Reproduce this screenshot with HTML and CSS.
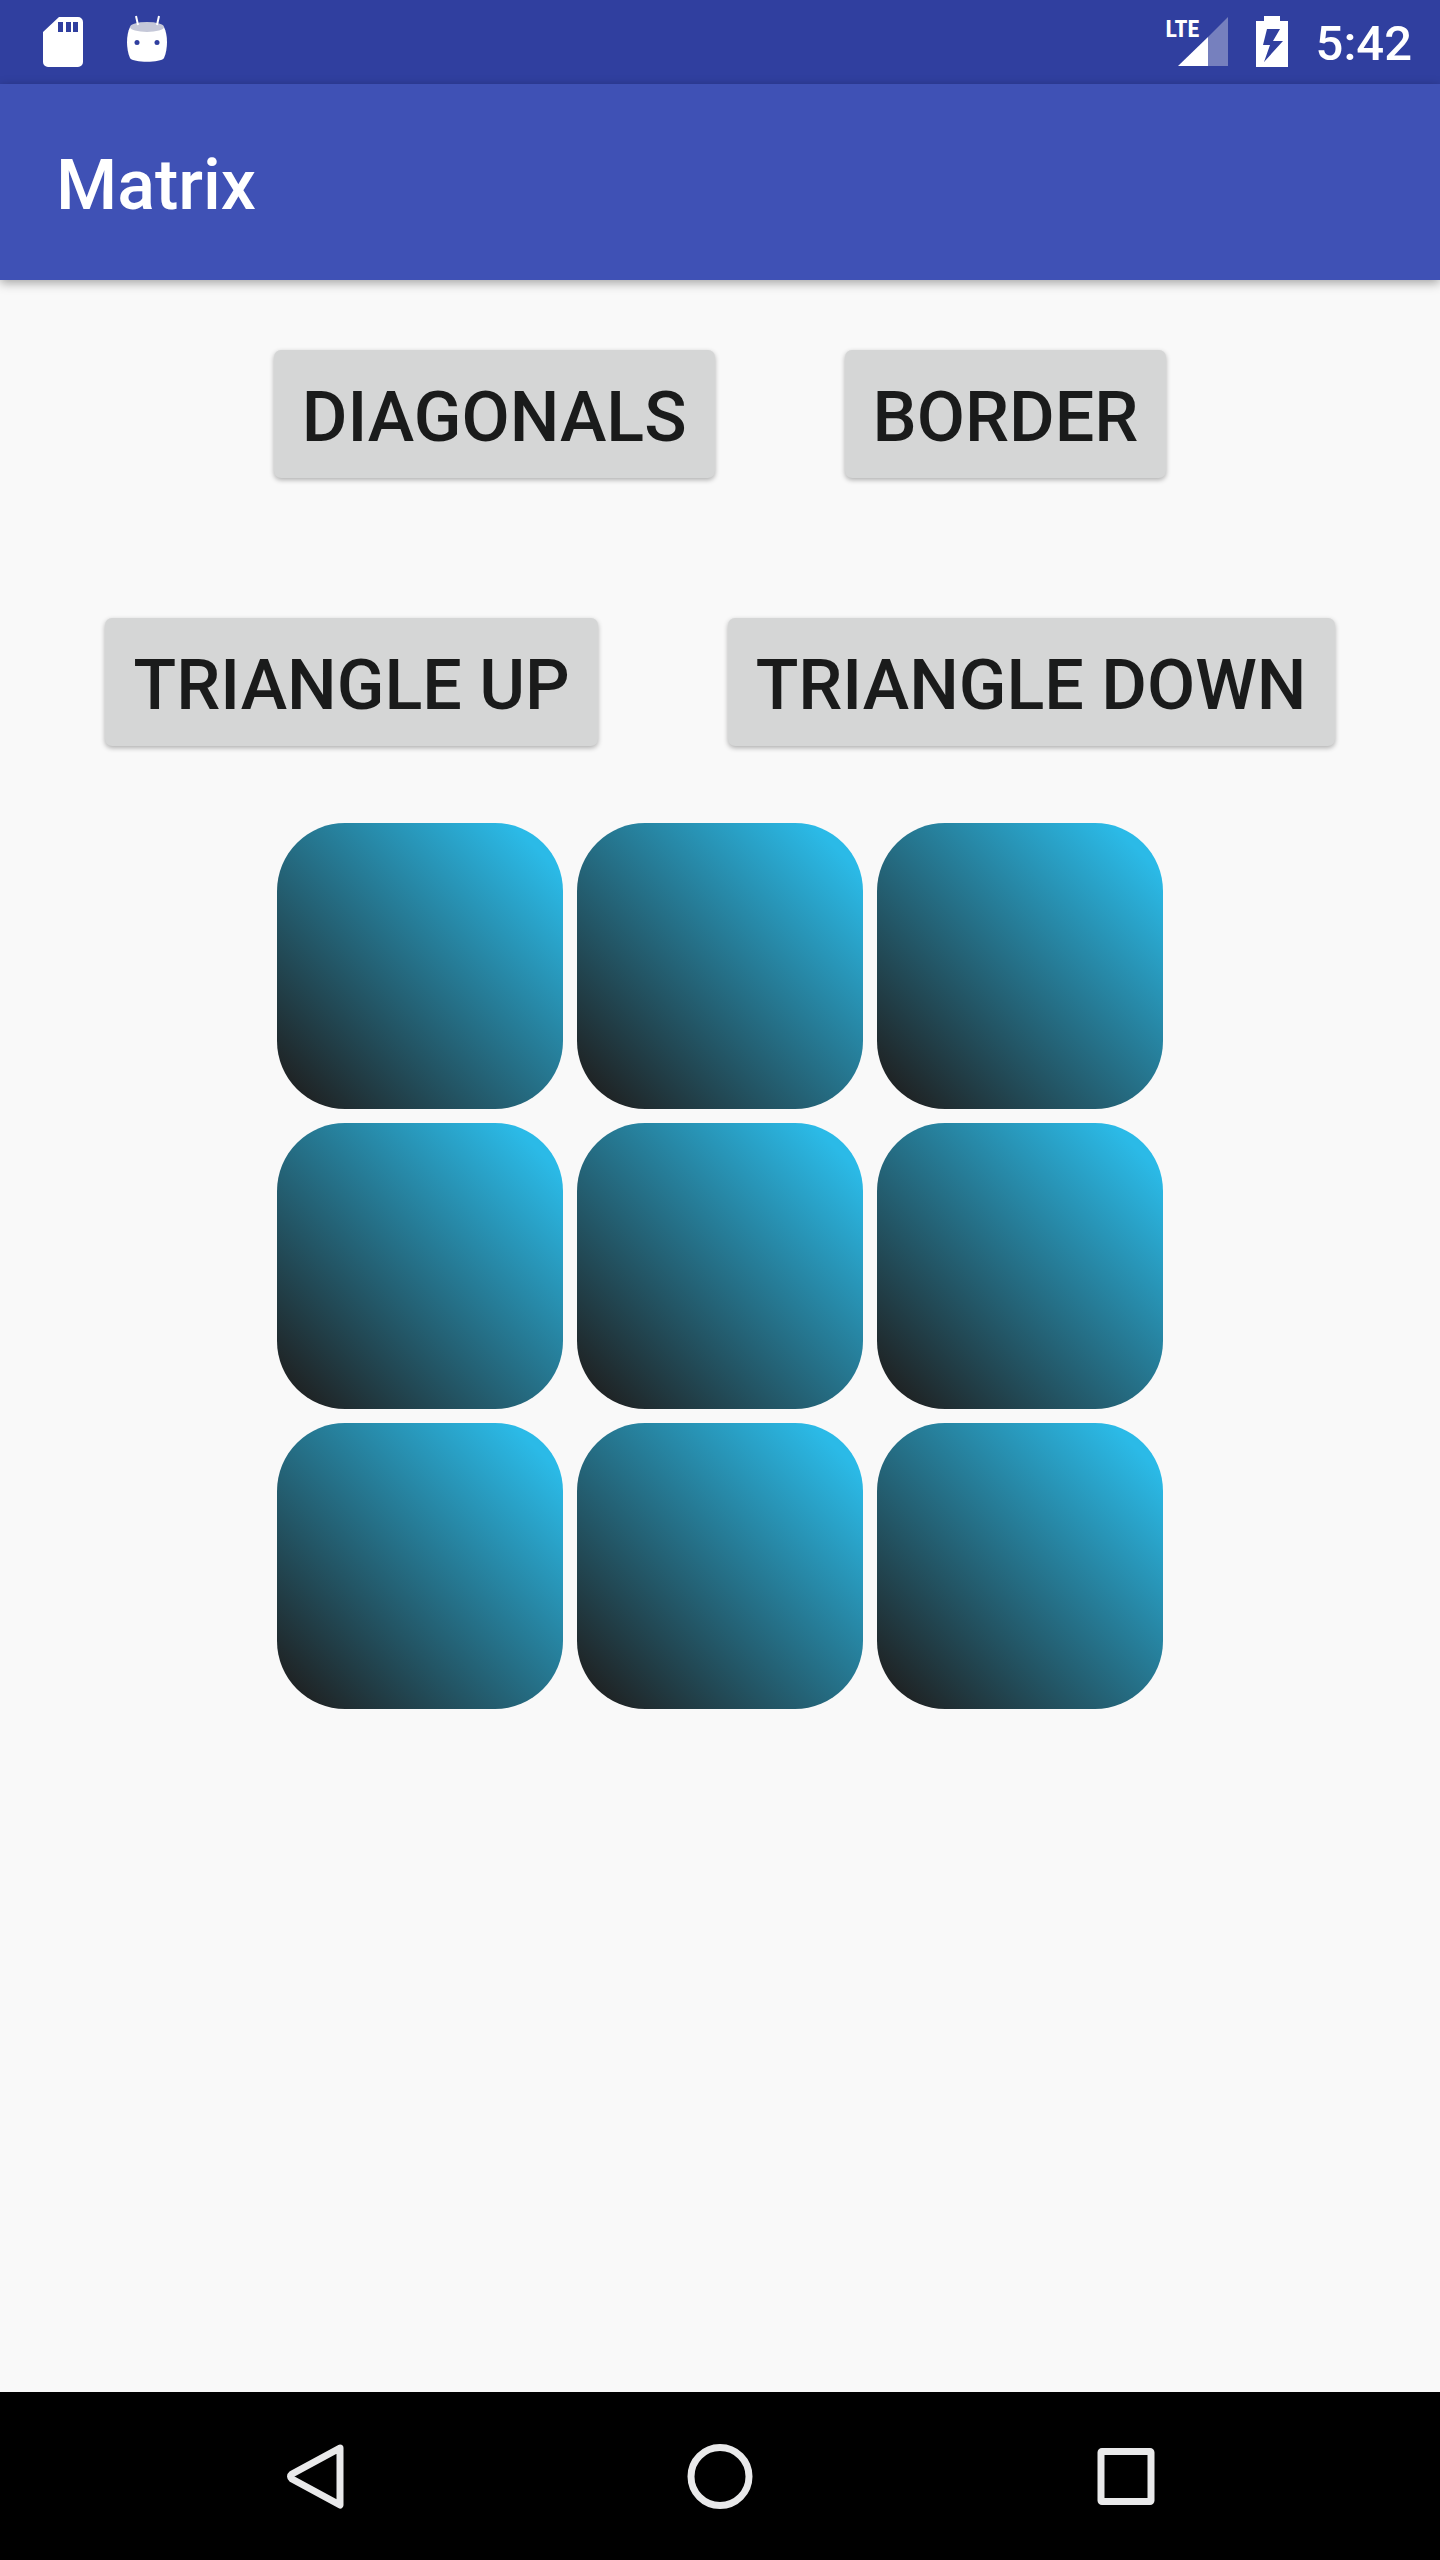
FILE: index.html
```html
<!DOCTYPE html>
<html lang="en">
<head>
<meta charset="utf-8">
<meta name="viewport" content="width=device-width, initial-scale=1">
<title>Matrix</title>
<link rel="stylesheet" href="styles.css">
</head>
<body>
<div class="status-bar">
  <div class="status-group notifications">
    <svg class="icon-sd" viewBox="0 0 40 50" aria-hidden="true"><path fill="#fff" fill-rule="evenodd" d="M16 0H35a5 5 0 0 1 5 5V45a5 5 0 0 1-5 5H5a5 5 0 0 1-5-5V15ZM15 5V15h5V5ZM23 5V15h5V5ZM30 5V15h5V5Z"/></svg>
    <svg class="icon-droid" viewBox="0 0 40 50" aria-hidden="true"><path fill="#fff" d="M3 10C-1 18-1 32 3 41c3 5 31 5 34 0 4-9 4-23 0-31Z"/><ellipse cx="20" cy="10" rx="17" ry="5" fill="#c5c8d8"/><path d="M9-1l2 9M32-1l-2 9" stroke="#fff" stroke-width="2"/><circle cx="10" cy="25.500" r="2.500" fill="#303f9f"/><circle cx="30" cy="25.500" r="2.500" fill="#303f9f"/></svg>
  </div>
  <div class="status-group system">
    <div class="signal">
      <svg class="icon-signal" viewBox="0 0 62 50" aria-hidden="true"><path fill="#7680be" d="M62 0V49H42V20Z"/><path fill="#fff" d="M42 20V49H12Z"/></svg>
      <span class="network">LTE</span>
    </div>
    <svg class="icon-battery" viewBox="0 0 34 52" aria-hidden="true"><path fill="#fff" fill-rule="evenodd" d="M9 0H25V5H33V51H1V5H9ZM12 13L8 29H15L9 46L28 25H18L25 13Z"/></svg>
    <time class="clock">5:42</time>
  </div>
</div>
<header class="app-bar"><h1>Matrix</h1></header>
<main>
  <div class="button-row">
    <button type="button" class="action">DIAGONALS</button>
    <button type="button" class="action">BORDER</button>
  </div>
  <div class="button-row">
    <button type="button" class="action">TRIANGLE UP</button>
    <button type="button" class="action">TRIANGLE DOWN</button>
  </div>
  <div class="matrix">
    <div class="cell"></div><div class="cell"></div><div class="cell"></div>
    <div class="cell"></div><div class="cell"></div><div class="cell"></div>
    <div class="cell"></div><div class="cell"></div><div class="cell"></div>
  </div>
</main>
<nav class="nav-bar">
  <button type="button" aria-label="Back"><svg viewBox="0 0 84 84"><path d="M68 14L20 40q-3 2.500 0 5L68 71Z"/></svg></button>
  <button type="button" aria-label="Home"><svg viewBox="0 0 84 84"><circle cx="42" cy="42.500" r="29"/></svg></button>
  <button type="button" aria-label="Recent apps"><svg viewBox="0 0 84 84"><rect x="17" y="17.500" width="50" height="50" rx="1"/></svg></button>
</nav>
</body>
</html>
```
FILE: styles.css
```css
* {
  box-sizing: border-box;
}

body {
  margin: 0;
  min-height: 100vh;
  display: flex;
  flex-direction: column;
  background: #f9f9f9;
  font-family: Roboto, "Liberation Sans", sans-serif;
  font-weight: 500;
}

svg {
  display: block;
  overflow: visible;
}

.status-bar {
  display: flex;
  justify-content: space-between;
  height: 84px;
  padding: 0 28px 0 43px;
  background: #303f9f;
  color: #fff;
}

.status-group {
  display: flex;
  align-items: center;
}

.notifications {
  gap: 44px;
}

.icon-sd,
.icon-droid {
  width: 40px;
  height: 50px;
}

.system {
  gap: 27px;
}

.signal {
  position: relative;
}

.icon-signal {
  width: 62px;
  height: 50px;
}

.network {
  position: absolute;
  top: 0;
  left: 0;
  font: bold 24px/24px "Liberation Sans Narrow", "Roboto Condensed", Roboto, sans-serif;
}

.icon-battery {
  width: 34px;
  height: 52px;
}

.clock {
  padding-top: 4px;
  font-size: 49px;
  line-height: 80px;
}

.app-bar {
  display: flex;
  align-items: center;
  height: 196px;
  padding: 6px 56px 0;
  background: #3f51b5;
  color: #fff;
  box-shadow: 0 3px 10px rgba(0, 0, 0, 0.35);
}

h1 {
  margin: 0;
  font-size: 70px;
  line-height: 84px;
  font-weight: 500;
}

main {
  flex: 1;
  display: flex;
  flex-direction: column;
  align-items: center;
  padding: 70px 16px;
}

.button-row {
  display: flex;
  justify-content: center;
  gap: 130px;
  margin-bottom: 140px;
}

.button-row + .button-row {
  margin-bottom: 77px;
}

.action {
  height: 128px;
  padding: 5px 28px 0;
  border: 0;
  border-radius: 7px;
  background: #d5d6d6;
  color: #1a1b1b;
  font: 500 70px/84px Roboto, "Liberation Sans", sans-serif;
  box-shadow: 0 2px 5px rgba(0, 0, 0, 0.3);
}

.matrix {
  display: grid;
  grid-template-columns: repeat(3, 286px);
  gap: 14px;
}

.cell {
  aspect-ratio: 1;
  border-radius: 68px;
  background: linear-gradient(45deg, #1f2223 6%, #2bbae7 91%);
}

.nav-bar {
  display: flex;
  justify-content: center;
  align-items: center;
  gap: 322px;
  height: 168px;
  background: #000;
}

.nav-bar button {
  width: 84px;
  height: 84px;
  padding: 0;
  border: 0;
  background: none;
}

.nav-bar svg {
  fill: none;
  stroke: #e9e9ea;
  stroke-width: 7px;
  stroke-linejoin: round;
}
```
